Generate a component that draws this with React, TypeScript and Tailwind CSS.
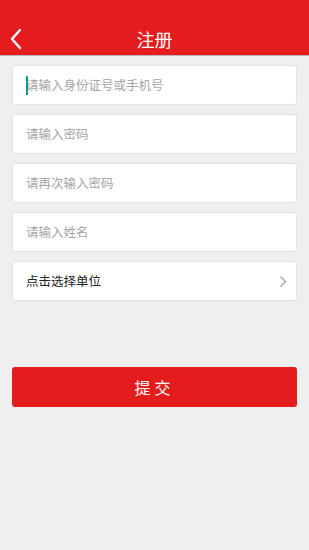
import { useState } from 'react';

const font = { fontFamily: '"Noto Sans CJK SC", "Noto Sans", sans-serif' };

function Field({ placeholder, type = 'text', focused = false }: { placeholder: string; type?: string; focused?: boolean }) {
  const [value, setValue] = useState('');
  return (
    <div className="relative flex h-[40px] items-center rounded-[3px] border border-[#e2e2e2] bg-white px-[13px]">
      {focused && value === '' ? (
        <span className="absolute left-[13px] top-[10px] h-[19px] w-[2px] bg-[#11998e]" />
      ) : null}
      <input
        type={type}
        value={value}
        onChange={(e) => setValue(e.target.value)}
        placeholder={placeholder}
        className="w-full bg-transparent text-[12.5px] text-[#333] outline-none placeholder:text-[#a5a5a5]"
        style={font}
      />
    </div>
  );
}

export default function App() {
  return (
    <div className="flex h-[550px] w-[309px] flex-col bg-[#efefef]" style={font}>
      <header className="h-[56px] border-b border-[#b9b9b9] bg-[#e51c1e] pt-[23px]">
        <div className="relative flex h-[32px] w-full items-center justify-center">
          <button type="button" className="absolute left-[9px] top-[5px]" aria-label="返回">
            <svg width="14" height="22" viewBox="0 0 14 22" fill="none">
              <path d="M11 2 L3 11 L11 20" stroke="white" strokeWidth="2.4" strokeLinecap="round" strokeLinejoin="round" />
            </svg>
          </button>
          <h1 className="text-[18px] leading-none text-white">注册</h1>
        </div>
      </header>

      <div className="flex flex-col gap-[9px] px-[12px] pt-[9px]">
        <Field placeholder="请输入身份证号或手机号" focused />
        <Field placeholder="请输入密码" type="password" />
        <Field placeholder="请再次输入密码" type="password" />
        <Field placeholder="请输入姓名" />
        <button
          type="button"
          className="flex h-[40px] items-center justify-between rounded-[3px] border border-[#e2e2e2] bg-white pl-[13px] pr-[9px] text-left"
        >
          <span className="text-[12.5px] text-[#222]">点击选择单位</span>
          <svg width="8" height="13" viewBox="0 0 8 13" fill="none">
            <path d="M1.5 1.5 L6.5 6.5 L1.5 11.5" stroke="#9a9a9a" strokeWidth="1.1" />
          </svg>
        </button>
      </div>

      <div className="px-[12px] pt-[66px]">
        <button
          type="button"
          className="flex h-[40px] w-full items-center justify-center rounded-[3px] bg-[#e51c1e] text-[16px] tracking-[4px] text-white"
        >
          提交
        </button>
      </div>
    </div>
  );
}
